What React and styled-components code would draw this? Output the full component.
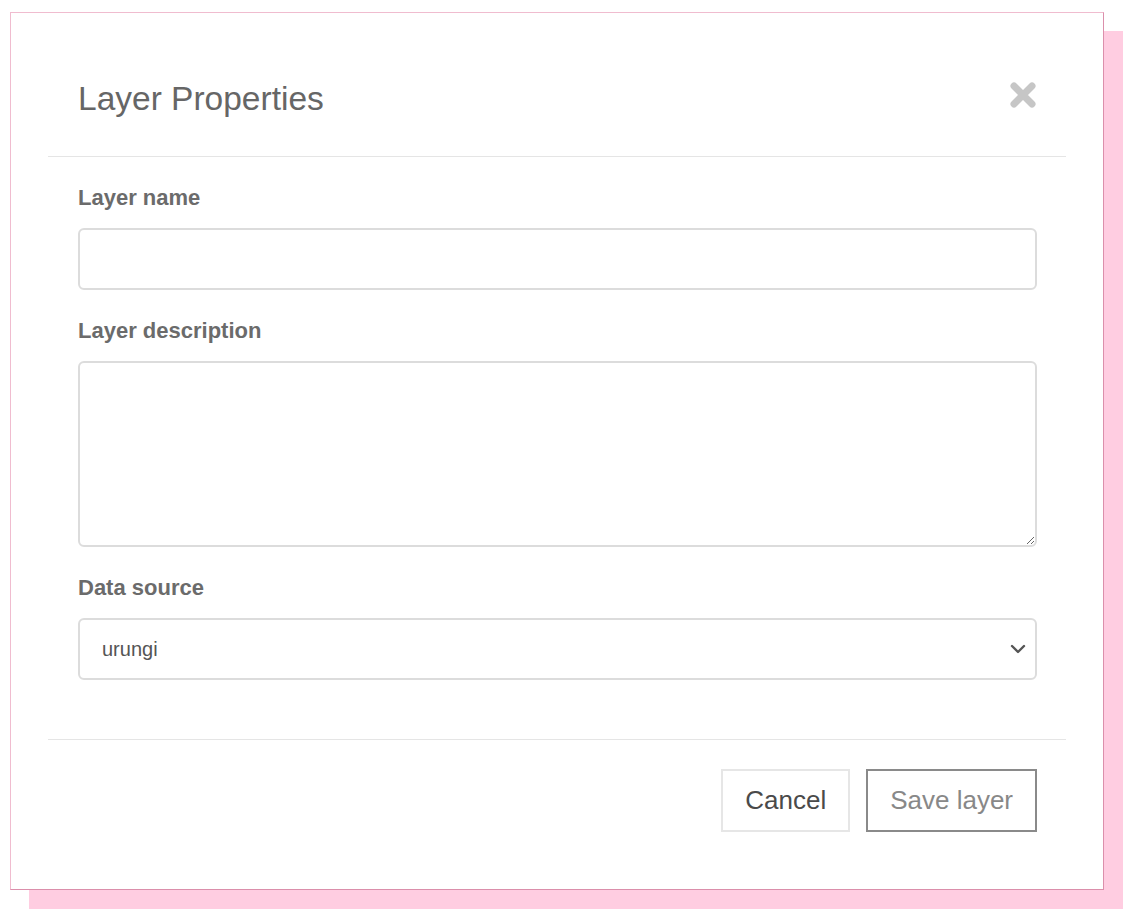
import React from 'react'
import styled, { createGlobalStyle } from 'styled-components'

const GlobalStyle = createGlobalStyle`
  html, body {
    margin: 0;
    padding: 0;
    background: #fff;
    font-family: "Liberation Sans", Arial, sans-serif;
  }
`

const Page = styled.div`
  padding: 12px 0 31px 10px;
`

const Dialog = styled.div`
  width: 1094px;
  height: 878px;
  box-sizing: border-box;
  background: #fff;
  border: 1px solid #f0bccf;
  border-right-color: #db8fab;
  border-bottom-color: #db8fab;
  box-shadow: 19px 19px 0 #ffcde1;
  padding: 0 37px;
  display: flex;
  flex-direction: column;
`

const Header = styled.div`
  display: flex;
  justify-content: space-between;
  align-items: flex-start;
  padding: 68px 29px 0 30px;
  height: 144px;
  box-sizing: border-box;
  border-bottom: 1px solid #e5e5e5;
`

const Title = styled.h4`
  margin: 0;
  font-size: 33.5px;
  line-height: 36px;
  font-weight: normal;
  color: #666;
`

const Close = styled.button`
  border: none;
  background: none;
  padding: 0;
  margin-top: 1px;
  cursor: pointer;
  display: flex;
`

const Body = styled.div`
  padding: 26px 29px 0 30px;
  height: 583px;
  box-sizing: border-box;
  border-bottom: 1px solid #e5e5e5;
`

const Group = styled.div`
  margin-bottom: 26px;
`

const Label = styled.label`
  display: block;
  font-size: 22px;
  line-height: 30px;
  font-weight: bold;
  color: #6b6b6b;
  margin-bottom: 15px;
`

const Input = styled.input`
  display: block;
  width: 100%;
  height: 62px;
  box-sizing: border-box;
  border: 2px solid #dcdcdc;
  border-radius: 6px;
  padding: 0 22px;
  font-family: inherit;
  font-size: 20px;
  color: #555;
  outline: none;
`

const TextArea = styled.textarea`
  display: block;
  width: 100%;
  height: 186px;
  box-sizing: border-box;
  border: 2px solid #dcdcdc;
  border-radius: 6px;
  padding: 12px 22px;
  font-family: inherit;
  font-size: 20px;
  color: #555;
  outline: none;
  resize: vertical;
`

const SelectWrap = styled.div`
  position: relative;
`

const Select = styled.select`
  display: block;
  width: 100%;
  height: 62px;
  box-sizing: border-box;
  border: 2px solid #dcdcdc;
  border-radius: 6px;
  padding: 0 22px;
  font-family: inherit;
  font-size: 20px;
  color: #555;
  background: #fff;
  appearance: none;
  -webkit-appearance: none;
  outline: none;
`

const Arrow = styled.svg`
  position: absolute;
  right: 11px;
  top: 26px;
  pointer-events: none;
`

const Footer = styled.div`
  display: flex;
  justify-content: flex-end;
  gap: 16px;
  padding: 29px 29px 0 30px;
`

const Button = styled.button`
  height: 63px;
  box-sizing: border-box;
  padding: 0 22px;
  background: #fff;
  border: ${({ $primary }) => ($primary ? '2px solid #8a8a8a' : '2px solid #e6e6e6')};
  border-radius: 0;
  font-family: inherit;
  font-size: 26px;
  color: ${({ $primary }) => ($primary ? '#888' : '#4a4a4a')};
  cursor: pointer;
`

const App = () => {
  return (
    <>
      <GlobalStyle />
      <Page>
        <Dialog>
          <Header>
            <Title>Layer Properties</Title>
            <Close aria-label='close'>
              <svg width='28' height='26' viewBox='0 0 28 26'>
                <path d='M5 4 L23 22 M23 4 L5 22' stroke='#c6c6c6' strokeWidth='7' strokeLinecap='round' />
              </svg>
            </Close>
          </Header>
          <Body>
            <Group>
              <Label htmlFor='name'>Layer name</Label>
              <Input id='name' type='text' />
            </Group>
            <Group>
              <Label htmlFor='desc'>Layer description</Label>
              <TextArea id='desc' />
            </Group>
            <Group>
              <Label htmlFor='source'>Data source</Label>
              <SelectWrap>
                <Select id='source' defaultValue='urungi'>
                  <option value='urungi'>urungi</option>
                </Select>
                <Arrow width='16' height='10' viewBox='0 0 16 10'>
                  <path d='M2 2 L8 8 L14 2' fill='none' stroke='#555' strokeWidth='2.4' strokeLinecap='round' strokeLinejoin='round' />
                </Arrow>
              </SelectWrap>
            </Group>
          </Body>
          <Footer>
            <Button>Cancel</Button>
            <Button $primary>Save layer</Button>
          </Footer>
        </Dialog>
      </Page>
    </>
  )
}

export default App
